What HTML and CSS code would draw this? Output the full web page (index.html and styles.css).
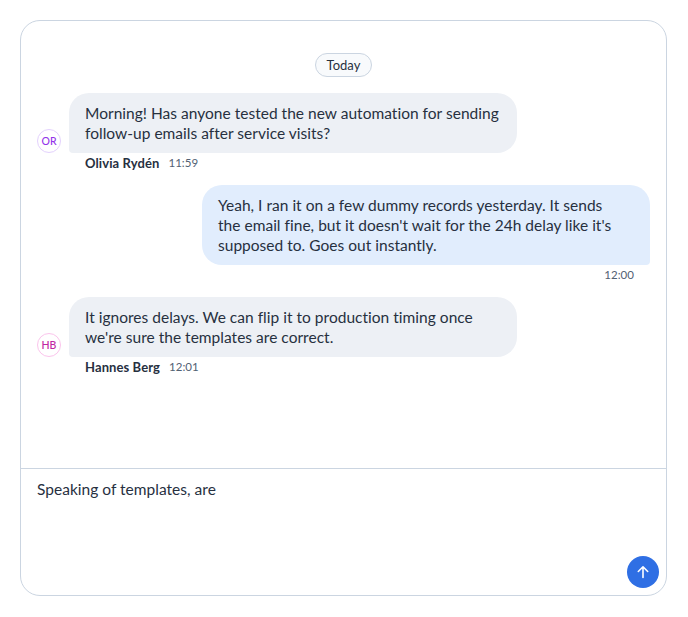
FILE: index.html
```html
<!DOCTYPE html>
<html lang="en">
<head>
  <meta charset="UTF-8">
  <title>Chat</title>
  <meta name="viewport" content="width=device-width, initial-scale=1.0">
  <link rel="stylesheet" href="styles.css">
</head>
<body>

  <div class="chat">
    <div class="messages">
      <div class="day"><span class="day-pill">Today</span></div>

      <div class="msg">
        <div class="msg-row">
          <div class="avatar avatar-purple">OR</div>
          <div class="bubble">Morning! Has anyone tested the new automation for sending follow-up emails after service visits?</div>
        </div>
        <div class="meta"><span class="name">Olivia Rydén</span><span class="time">11:59</span></div>
      </div>

      <div class="msg msg-own">
        <div class="bubble">Yeah, I ran it on a few dummy records yesterday. It sends<br>the email fine, but it doesn't wait for the 24h delay like it's supposed to. Goes out instantly.</div>
        <div class="meta"><span class="time">12:00</span></div>
      </div>

      <div class="msg">
        <div class="msg-row">
          <div class="avatar avatar-pink">HB</div>
          <div class="bubble">It ignores delays. We can flip it to production timing once we're sure the templates are correct.</div>
        </div>
        <div class="meta"><span class="name">Hannes Berg</span><span class="time">12:01</span></div>
      </div>
    </div>

    <div class="composer">
      <div class="draft">Speaking of templates, are</div>
      <button class="send" type="button" aria-label="Send">
        <svg width="16" height="16" viewBox="0 0 16 16" fill="none" stroke="#fff" stroke-width="1.6" stroke-linecap="round" stroke-linejoin="round">
          <path d="M8 13.500V2.800M3.300 7.500 8 2.800l4.700 4.700"/>
        </svg>
      </button>
    </div>
  </div>

</body>
</html>
```

FILE: styles.css
```css
body {
  margin: 0;
  padding: 20px 21px 20px 20px;
  background-color: #fff;
  color: #27303f;
  font-family: "Lato", sans-serif;
  font-size: 15.5px;
  letter-spacing: 0.02px;
  line-height: 20px;
}

.chat {
  display: flex;
  flex-direction: column;
  height: 576px;
  box-sizing: border-box;
  border: 1px solid #cbd5e1;
  border-radius: 20px;
}

.messages {
  flex: 1;
  display: flex;
  flex-direction: column;
  gap: 12px;
  padding: 32px 16px 0;
}

.day {
  display: flex;
  justify-content: center;
  margin-bottom: 4px;
}

.day-pill {
  padding: 1px 11px;
  border: 1px solid #cbd5e1;
  border-radius: 12px;
  background-color: #f8fafc;
  font-size: 13px;
}

.msg-row {
  display: flex;
  align-items: flex-end;
  gap: 8px;
}

.avatar {
  flex: none;
  width: 24px;
  height: 24px;
  box-sizing: border-box;
  border: 1px solid;
  border-radius: 50%;
  font-size: 10.5px;
  font-weight: 500;
  line-height: 22px;
  text-align: center;
}

.avatar-purple { border-color: #e3d1fd; color: #9333ea; }
.avatar-pink   { border-color: #fbc4ec; color: #c026a3; }

.bubble {
  width: 448px;
  box-sizing: border-box;
  padding: 10px 16px;
  border-radius: 20px 20px 20px 4px;
  background-color: #edf0f5;
}

.meta {
  display: flex;
  gap: 9px;
  padding-left: 48px;
  font-size: 11.5px;
}

.name {
  font-size: 13px;
  font-weight: 700;
  letter-spacing: 0.1px;
}

.time {
  color: #526173;
}

.msg-own {
  display: flex;
  flex-direction: column;
  align-items: flex-end;
}

.msg-own .bubble {
  border-radius: 20px 20px 4px 20px;
  background-color: #e1edfd;
}

.msg-own .meta {
  padding: 0 16px 0 0;
}

.composer {
  display: flex;
  flex-direction: column;
  justify-content: space-between;
  height: 127px;
  box-sizing: border-box;
  padding: 10px 7px 7px 16px;
  border-top: 1px solid #cbd5e1;
}

.send {
  align-self: flex-end;
  display: flex;
  align-items: center;
  justify-content: center;
  width: 32px;
  height: 32px;
  padding: 0;
  border: 0;
  border-radius: 50%;
  background-color: #2f6fe4;
}
```
